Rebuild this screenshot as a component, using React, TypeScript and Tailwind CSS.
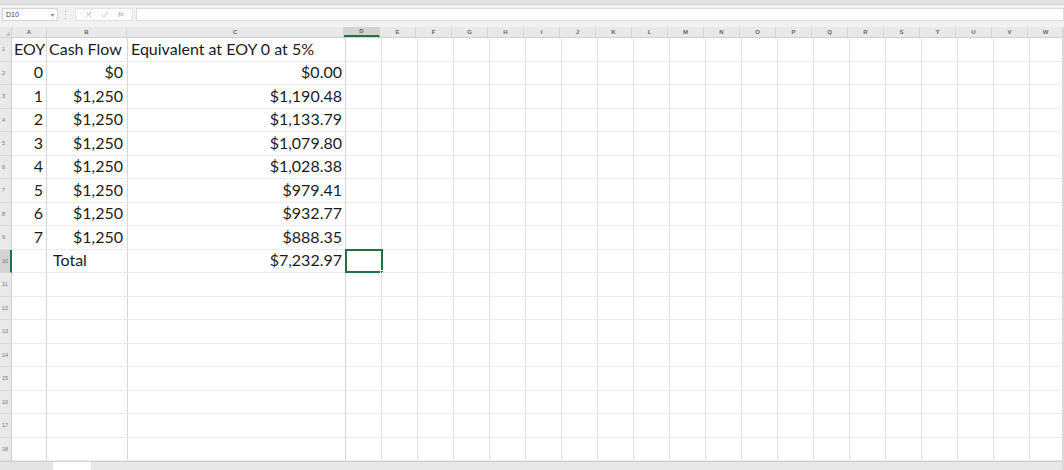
import React from "react";

const cellFont = { fontFamily: "Lato, 'Open Sans', sans-serif" };

const extraCols = ["D", "E", "F", "G", "H", "I", "J", "K", "L", "M", "N", "O", "P", "Q", "R", "S", "T", "U", "V", "W"];

// row heights chosen so the grid lines land on the screenshot
const rowHeights = [24, 23, 24, 23, 24, 23, 24, 23, 24, 23, 24, 23, 24, 23, 24, 23, 24, 23];

const data: [string, string, string][] = [
  ["EOY", "Cash Flow", "Equivalent at EOY 0 at 5%"],
  ["0", "$0", "$0.00"],
  ["1", "$1,250", "$1,190.48"],
  ["2", "$1,250", "$1,133.79"],
  ["3", "$1,250", "$1,079.80"],
  ["4", "$1,250", "$1,028.38"],
  ["5", "$1,250", "$979.41"],
  ["6", "$1,250", "$932.77"],
  ["7", "$1,250", "$888.35"],
  ["", "Total", "$7,232.97"],
];

function FormulaBar() {
  return (
    <div className="h-[27px] bg-[#f1f1f1] flex flex-col">
      <div className="h-[5px] bg-[#e2e2e2] border-b border-[#d6d6d6]" />
      <div className="flex items-center h-[15px] mt-[2px]">
        <div className="ml-[2px] w-[56px] h-[13px] bg-white border border-[#d4d4d4] flex items-center justify-between px-[3px]">
          <span className="text-[7px] text-[#444] leading-none" style={{ fontFamily: "'Liberation Sans', sans-serif" }}>D10</span>
          <span className="text-[6px] text-[#777] leading-none">▾</span>
        </div>
        <div className="ml-[7px] w-[1px] h-[8px] flex flex-col justify-between">
          <div className="w-[1px] h-[1px] bg-[#aaa]" />
          <div className="w-[1px] h-[1px] bg-[#aaa]" />
          <div className="w-[1px] h-[1px] bg-[#aaa]" />
        </div>
        <div className="ml-[9px] w-[58px] h-[13px] bg-white border border-[#e0e0e0] flex items-center justify-around px-[4px] text-[#b5b5b5]">
          <svg width="7" height="7" viewBox="0 0 7 7"><path d="M1 1L6 6M6 1L1 6" stroke="#c2c2c2" strokeWidth="0.9" /></svg>
          <svg width="8" height="7" viewBox="0 0 8 7"><path d="M1 4L3 6L7 1" stroke="#c2c2c2" strokeWidth="0.9" fill="none" /></svg>
          <span className="text-[7px] italic leading-none text-[#888]" style={{ fontFamily: "'Liberation Serif', serif" }}>fx</span>
        </div>
        <div className="ml-[3px] flex-1 h-[13px] bg-white border border-[#dcdcdc]" />
      </div>
    </div>
  );
}

function HeaderRow() {
  return (
    <div className="flex h-[11px] bg-[#e9e9e9] border-b border-[#d0d0d0]">
      <div className="w-[12px] h-full border-r border-[#cfcfcf] relative">
        <div className="absolute right-[1px] bottom-[1px] w-0 h-0 border-l-[5px] border-l-transparent border-b-[5px] border-b-[#c8c8c8]" />
      </div>
      {[
        ["A", 35],
        ["B", 81],
        ["C", 218],
      ].map(([l, w]) => (
        <div
          key={l as string}
          className="h-full border-r border-[#d4d4d4] flex items-center justify-center text-[6px] text-[#666] font-bold"
          style={{ width: w as number, fontFamily: "'Liberation Sans', sans-serif" }}
        >
          {l}
        </div>
      ))}
      {extraCols.map((l) => (
        <div
          key={l}
          className={
            "w-[36px] shrink-0 h-full border-r border-[#d4d4d4] flex items-center justify-center text-[6px] text-[#666] font-bold " +
            (l === "D" ? "bg-[#d3d3d3] border-b-2 border-b-[#217346]" : "")
          }
          style={{ fontFamily: "'Liberation Sans', sans-serif" }}
        >
          {l}
        </div>
      ))}
    </div>
  );
}

function Row({ idx, h }: { idx: number; h: number }) {
  const vals = data[idx] ?? ["", "", ""];
  const selected = idx === 9;
  const header = idx === 0;
  return (
    <div className="flex" style={{ height: h }}>
      <div
        className={
          "w-[12px] shrink-0 h-full flex items-center pl-[2px] text-[5.5px] text-[#777] border-b border-[#dadada] " +
          (selected ? "bg-[#d3d3d3] border-r-2 border-r-[#217346]" : "bg-[#e9e9e9] border-r border-r-[#cfcfcf]")
        }
        style={{ fontFamily: "'Liberation Sans', sans-serif" }}
      >
        {idx + 1}
      </div>
      <div
        className={
          "w-[35px] shrink-0 h-full border-r border-[#d6d6d6] border-b border-b-[#ececec] flex items-end pb-[1px] text-[16px] leading-[22px] text-[#1c1c1c] " +
          (header ? "justify-start pl-[2px]" : "justify-end pr-[3px]")
        }
        style={cellFont}
      >
        {vals[0]}
      </div>
      <div
        className={
          "w-[81px] shrink-0 h-full border-r border-[#d6d6d6] border-b border-b-[#ececec] flex items-end pb-[1px] text-[16px] leading-[22px] text-[#1c1c1c] " +
          (header ? "justify-start pl-[2px]" : selected ? "justify-start pl-[6px]" : "justify-end pr-[4px]")
        }
        style={cellFont}
      >
        {vals[1]}
      </div>
      <div
        className={
          "w-[218px] shrink-0 h-full border-r border-[#d6d6d6] border-b border-b-[#ececec] flex items-end pb-[1px] text-[16px] leading-[22px] text-[#1c1c1c] " +
          (header ? "justify-start pl-[3px]" : "justify-end pr-[3px]")
        }
        style={cellFont}
      >
        {vals[2]}
      </div>
      {extraCols.map((l) => (
        <div key={l} className="w-[36px] shrink-0 h-full border-r border-[#e0e0e0] border-b border-b-[#ececec] relative">
          {selected && l === "D" && (
            <div className="absolute -left-[1px] -top-[1px] w-[38px] border-2 border-[#217346]" style={{ height: h + 1 }}>
              <div className="absolute -right-[3px] -bottom-[3px] w-[4px] h-[4px] bg-[#217346] border border-white" />
            </div>
          )}
        </div>
      ))}
    </div>
  );
}

export default function App() {
  return (
    <div className="w-[1064px] h-[470px] overflow-hidden bg-white relative">
      <FormulaBar />
      <HeaderRow />
      {rowHeights.map((h, i) => (
        <Row key={i} idx={i} h={h} />
      ))}
      <div className="h-[9px] flex bg-[#e4e4e4] border-t border-[#d0d0d0]">
        <div className="w-[53px]" />
        <div className="w-[38px] bg-white" />
        <div className="flex-1 bg-[#e8e8e8]" />
      </div>
      <div className="absolute right-0 top-[27px] w-[2px] h-[443px] bg-[#d8d8d8]" />
    </div>
  );
}
